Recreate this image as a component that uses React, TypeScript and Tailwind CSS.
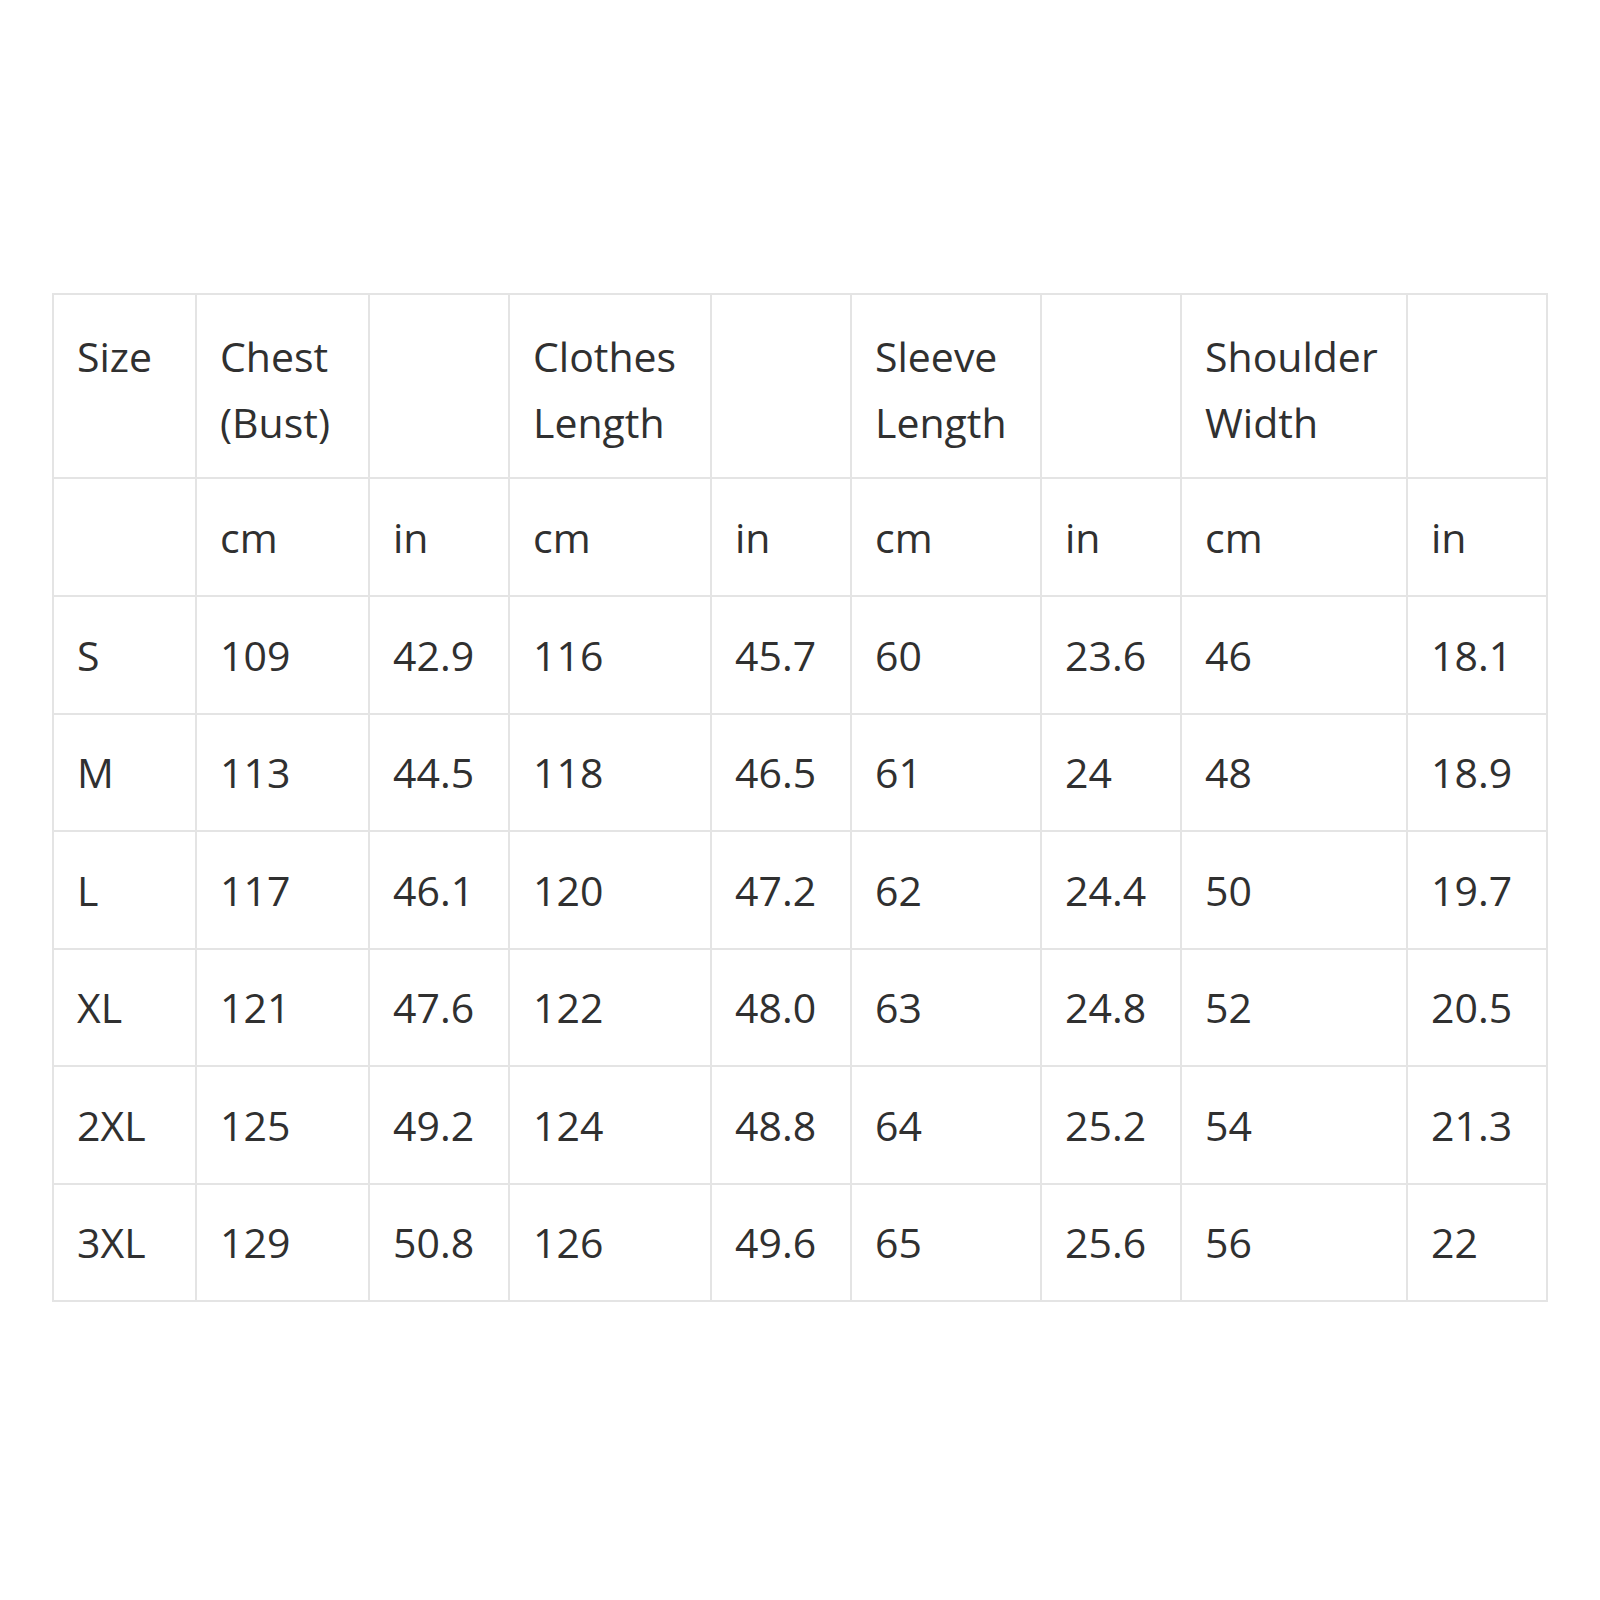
const widths = [143, 173, 140, 202, 140, 190, 140, 226, 140];

const header = ["Size", "Chest\n(Bust)", "", "Clothes\nLength", "", "Sleeve\nLength", "", "Shoulder\nWidth", ""];
const units = ["", "cm", "in", "cm", "in", "cm", "in", "cm", "in"];

const rows = [
  ["S", "109", "42.9", "116", "45.7", "60", "23.6", "46", "18.1"],
  ["M", "113", "44.5", "118", "46.5", "61", "24", "48", "18.9"],
  ["L", "117", "46.1", "120", "47.2", "62", "24.4", "50", "19.7"],
  ["XL", "121", "47.6", "122", "48.0", "63", "24.8", "52", "20.5"],
  ["2XL", "125", "49.2", "124", "48.8", "64", "25.2", "54", "21.3"],
  ["3XL", "129", "50.8", "126", "49.6", "65", "25.6", "56", "22"],
];

const cell = "border-2 border-[#e4e4e4] pl-[23px] pr-2 align-middle";

export default function App() {
  return (
    <div className="w-[1600px] h-[1600px] bg-white pt-[293px] pl-[52px]">
      <table
        className="table-fixed border-collapse w-[1496px] text-[41px] leading-[66px] text-[#303030]"
        style={{ fontFamily: '"Open Sans", "Noto Sans", sans-serif' }}
      >
        <colgroup>
          {widths.map((w, i) => (
            <col key={i} style={{ width: w }} />
          ))}
        </colgroup>
        <tbody>
          <tr className="h-[184px]">
            {header.map((h, i) => (
              <td key={i} className={`${cell} !align-top pt-[28px] whitespace-pre-line`}>
                {h}
              </td>
            ))}
          </tr>
          <tr className="h-[118px]">
            {units.map((u, i) => (
              <td key={i} className={cell}>
                {u}
              </td>
            ))}
          </tr>
          {rows.map((r) => (
            <tr key={r[0]} className="h-[117.5px]">
              {r.map((v, i) => (
                <td key={i} className={cell}>
                  {v}
                </td>
              ))}
            </tr>
          ))}
        </tbody>
      </table>
    </div>
  );
}
